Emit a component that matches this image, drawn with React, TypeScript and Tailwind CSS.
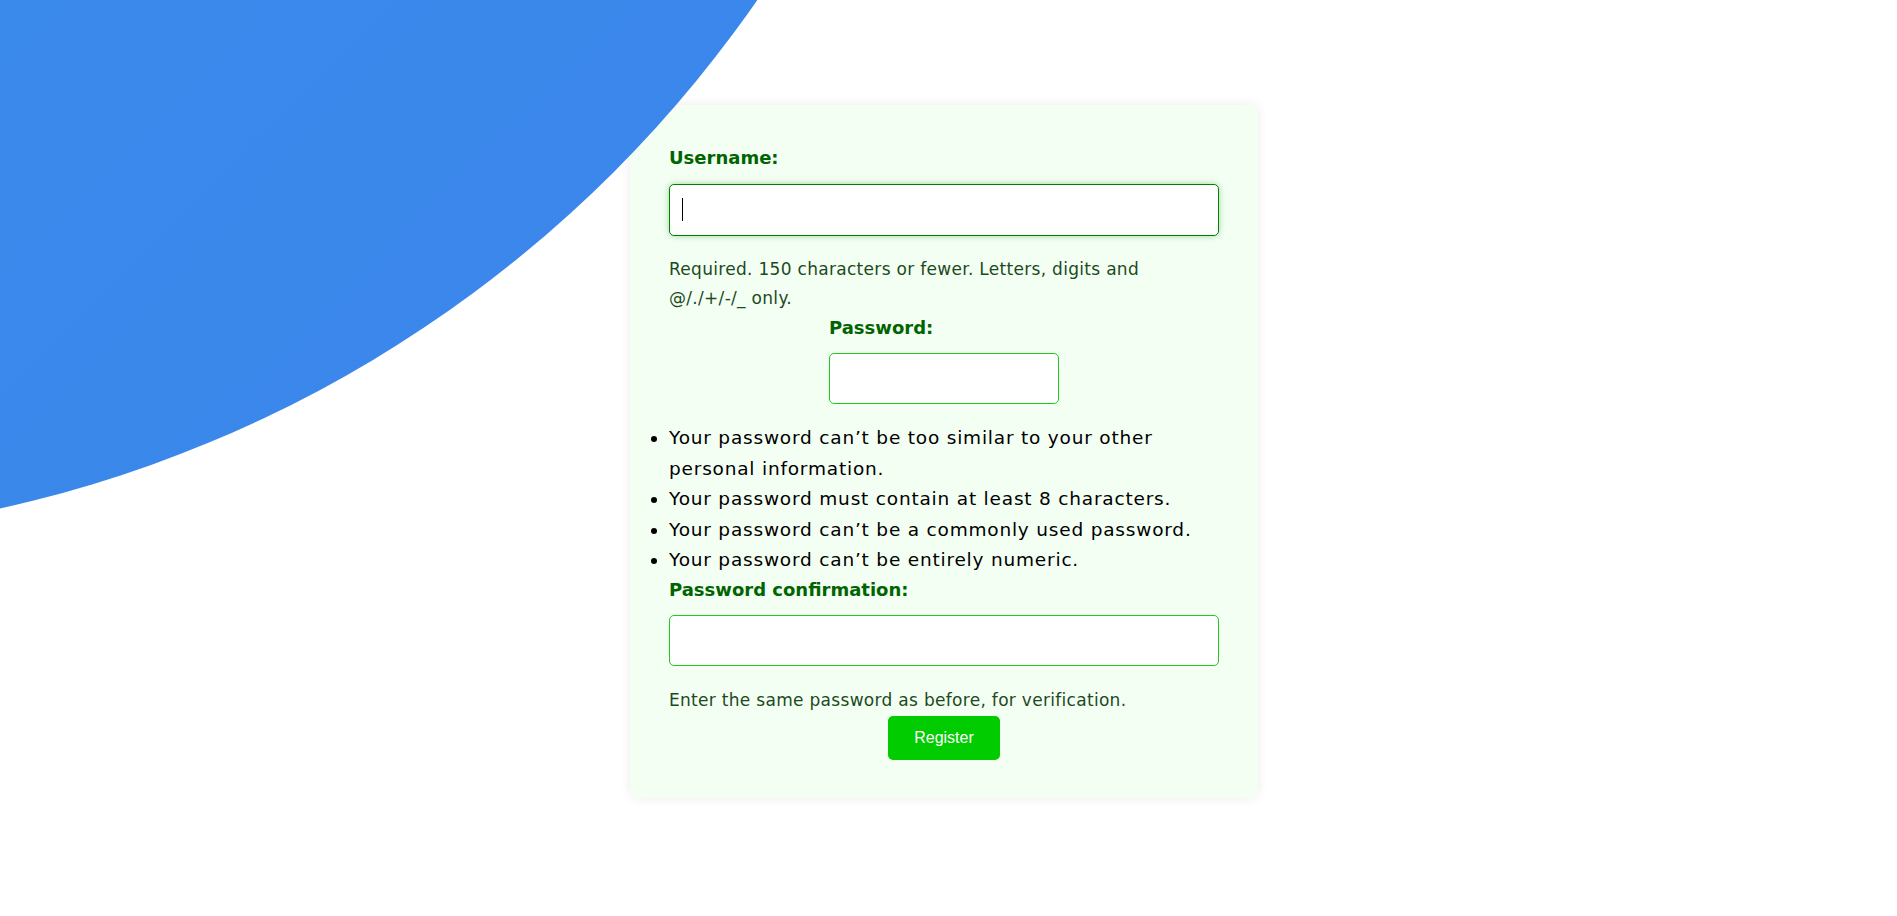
import React from 'react';

const helpText = 'text-[17px] leading-[29px] tracking-[0.3px] text-[#1c4a1c]';
const labelText = "block text-[18px] leading-[28px] font-bold text-[#006400]";

const rules = [
  'Your password can’t be too similar to your other personal information.',
  'Your password must contain at least 8 characters.',
  'Your password can’t be a commonly used password.',
  'Your password can’t be entirely numeric.',
];

export default function App() {
  return (
    <div className="relative min-h-screen overflow-hidden bg-white font-['DejaVu_Sans',sans-serif]">
      <div className="flex justify-center pr-[9px] pt-[105px] pb-[40px]">
        <form className="flex w-[628px] flex-col rounded-lg bg-[#f4fff4] px-[39px] pt-[39px] pb-[38px] shadow-[0_0_12px_rgba(0,0,0,0.08)]">
          <label htmlFor="username" className={labelText}>
            Username:
          </label>
          <div className="relative mt-[12px]">
            <input
              id="username"
              type="text"
              className="block h-[52px] w-full rounded-[5px] border border-[#008000] bg-white px-3 shadow-[0_0_6px_rgba(0,128,0,0.35)] outline-none"
            />
            <span className="absolute left-[13px] top-[14px] h-[23px] w-px bg-black" />
          </div>
          <p className={`${helpText} mt-[19px] max-w-[480px]`}>
            Required. 150 characters or fewer. Letters, digits and @/./+/-/_ only.
          </p>

          <div className="flex justify-center">
            <div className="flex w-[230px] flex-col">
              <label htmlFor="password1" className={`${labelText} mt-[1px]`}>
                Password:
              </label>
              <input
                id="password1"
                type="password"
                className="mt-[11px] block h-[51px] w-full rounded-[5px] border border-[#22c922] bg-white px-3 outline-none"
              />
            </div>
          </div>

          <ul className="mt-[19px] list-outside list-disc text-[18.5px] leading-[30.5px] tracking-[0.8px] text-black">
            {rules.map((r) => (
              <li key={r}>{r}</li>
            ))}
          </ul>

          <label htmlFor="password2" className={labelText}>
            Password confirmation:
          </label>
          <input
            id="password2"
            type="password"
            className="mt-[11px] block h-[51px] w-full rounded-[5px] border border-[#22c922] bg-white px-3 outline-none"
          />
          <p className={`${helpText} mt-[20px]`}>Enter the same password as before, for verification.</p>

          <div className="mt-[1px] flex justify-center">
            <button
              type="button"
              className="h-[44px] w-[112px] rounded-[5px] bg-[#00cc00] font-['Liberation_Sans',Arial,sans-serif] text-[16px] text-white"
            >
              Register
            </button>
          </div>
        </form>
      </div>

      <div className="pointer-events-none absolute left-[-1520px] top-[-1962px] h-[2500px] w-[2500px] rounded-full bg-gradient-to-br from-[#3396ee] to-[#3c84ea]" />
    </div>
  );
}
